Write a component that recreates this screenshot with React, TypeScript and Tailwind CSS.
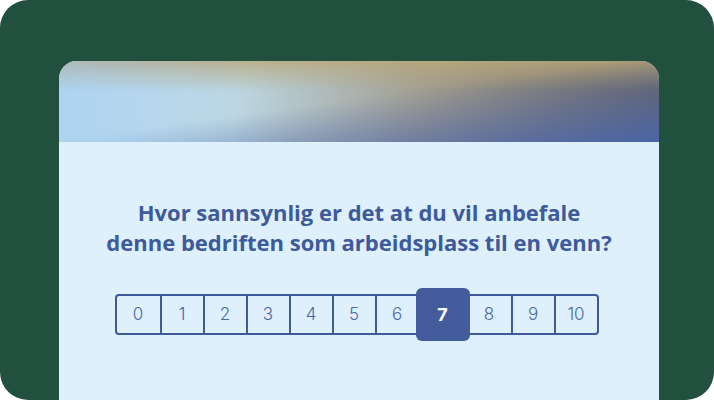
const scores = [0, 1, 2, 3, 4, 5, 6, 7, 8, 9, 10];

function ScoreScale({ selected }: { selected: number }) {
  return (
    <div className="flex items-center justify-center pr-[5px]">
      <div className="flex h-[41px] rounded-[4px] border-2 border-[#3f5a9b]">
        {scores.map((n, i) => {
          if (n === selected) {
            return (
              <div
                key={n}
                className="relative -my-[8px] -ml-[2px] -mr-[2px] z-10 flex h-[53px] w-[54px] items-center justify-center rounded-[6px] bg-[#435c9c] text-[18px] font-bold text-white"
              >
                {n}
              </div>
            );
          }
          const prevSelected = scores[i - 1] === selected;
          return (
            <div
              key={n}
              className={
                'flex w-[43px] items-center justify-center text-[17px] font-light text-[#4d65a2] ' +
                (i > 0 && !prevSelected ? 'border-l-2 border-[#3f5a9b]' : '')
              }
            >
              {n}
            </div>
          );
        })}
      </div>
    </div>
  );
}

export default function App() {
  return (
    <div className="h-[400px] w-[714px] overflow-hidden rounded-[28px] bg-[#21503f] pl-[59px] pr-[55px] pt-[61px] font-['Inter',sans-serif]">
      <div className="h-[400px] overflow-hidden rounded-t-[18px] bg-[#ddf0fc]">
        <div className="relative h-[81px] bg-[linear-gradient(100deg,#c2e6f8_0%,#bcd6e2_30%,#a19d90_60%,#6a625e_100%)]">
          <div className="absolute inset-0 bg-[linear-gradient(180deg,rgba(185,168,122,0.8)_0%,rgba(185,168,122,0)_38%)]" />
          <div className="absolute inset-0 bg-[linear-gradient(172deg,rgba(70,100,170,0)_48%,rgba(74,102,170,0.95)_100%)]" />
          <div className="absolute inset-0 bg-[linear-gradient(90deg,rgba(150,190,235,0.45)_0%,rgba(150,190,235,0)_30%)]" />
        </div>
        <div className="pt-[55px] text-center font-['Open_Sans',sans-serif] text-[22px] leading-[30px] font-bold text-[#3f5a9b]">
          <p>Hvor sannsynlig er det at du vil anbefale</p>
          <p>denne bedriften som arbeidsplass til en venn?</p>
        </div>
        <div className="pt-[37px]">
          <ScoreScale selected={7} />
        </div>
      </div>
    </div>
  );
}
